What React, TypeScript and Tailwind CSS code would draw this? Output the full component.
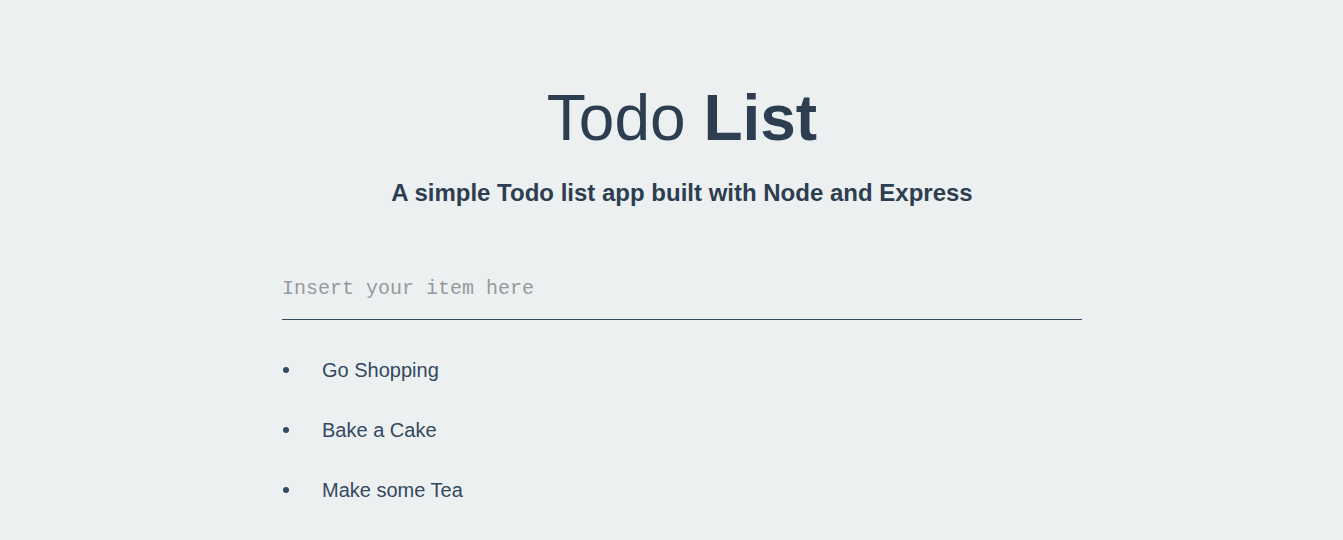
import { useState } from 'react';

const todos = ['Go Shopping', 'Bake a Cake', 'Make some Tea'];

export default function App() {
  const [item, setItem] = useState('');

  return (
    <div className="min-h-[540px] w-full bg-[#ecf0f1] text-[#2c3e50] font-['Liberation_Sans',Arial,sans-serif]">
      <div className="flex justify-center pl-[21px]">
        <div className="w-[800px] flex flex-col">
          <h1 className="mt-[86px] text-center text-[64px] leading-[64px] font-normal">
            Todo <span className="font-bold">List</span>
          </h1>
          <h3 className="mt-[31px] text-center text-[24px] leading-[24px] font-bold text-[#2c3e50]">
            A simple Todo list app built with Node and Express
          </h3>

          <input
            autoFocus
            value={item}
            onChange={(e) => setItem(e.target.value)}
            placeholder="Insert your item here"
            className="mt-[53px] w-full bg-transparent border-b border-[#34495e] py-[19px] text-[20px] leading-[23px] font-['Liberation_Mono','Courier_New',monospace] text-[#2c3e50] placeholder:text-[#969a9c] outline-none"
          />

          <ul className="mt-[20px] flex flex-col text-[#34495e]">
            {todos.map((todo) => (
              <li key={todo} className="flex items-center h-[60px] text-[20px] leading-[23px]">
                <span className="ml-[1px] w-[6px] h-[6px] rounded-full bg-[#34495e]" />
                <span className="ml-[33px]">{todo}</span>
              </li>
            ))}
          </ul>
        </div>
      </div>
    </div>
  );
}
